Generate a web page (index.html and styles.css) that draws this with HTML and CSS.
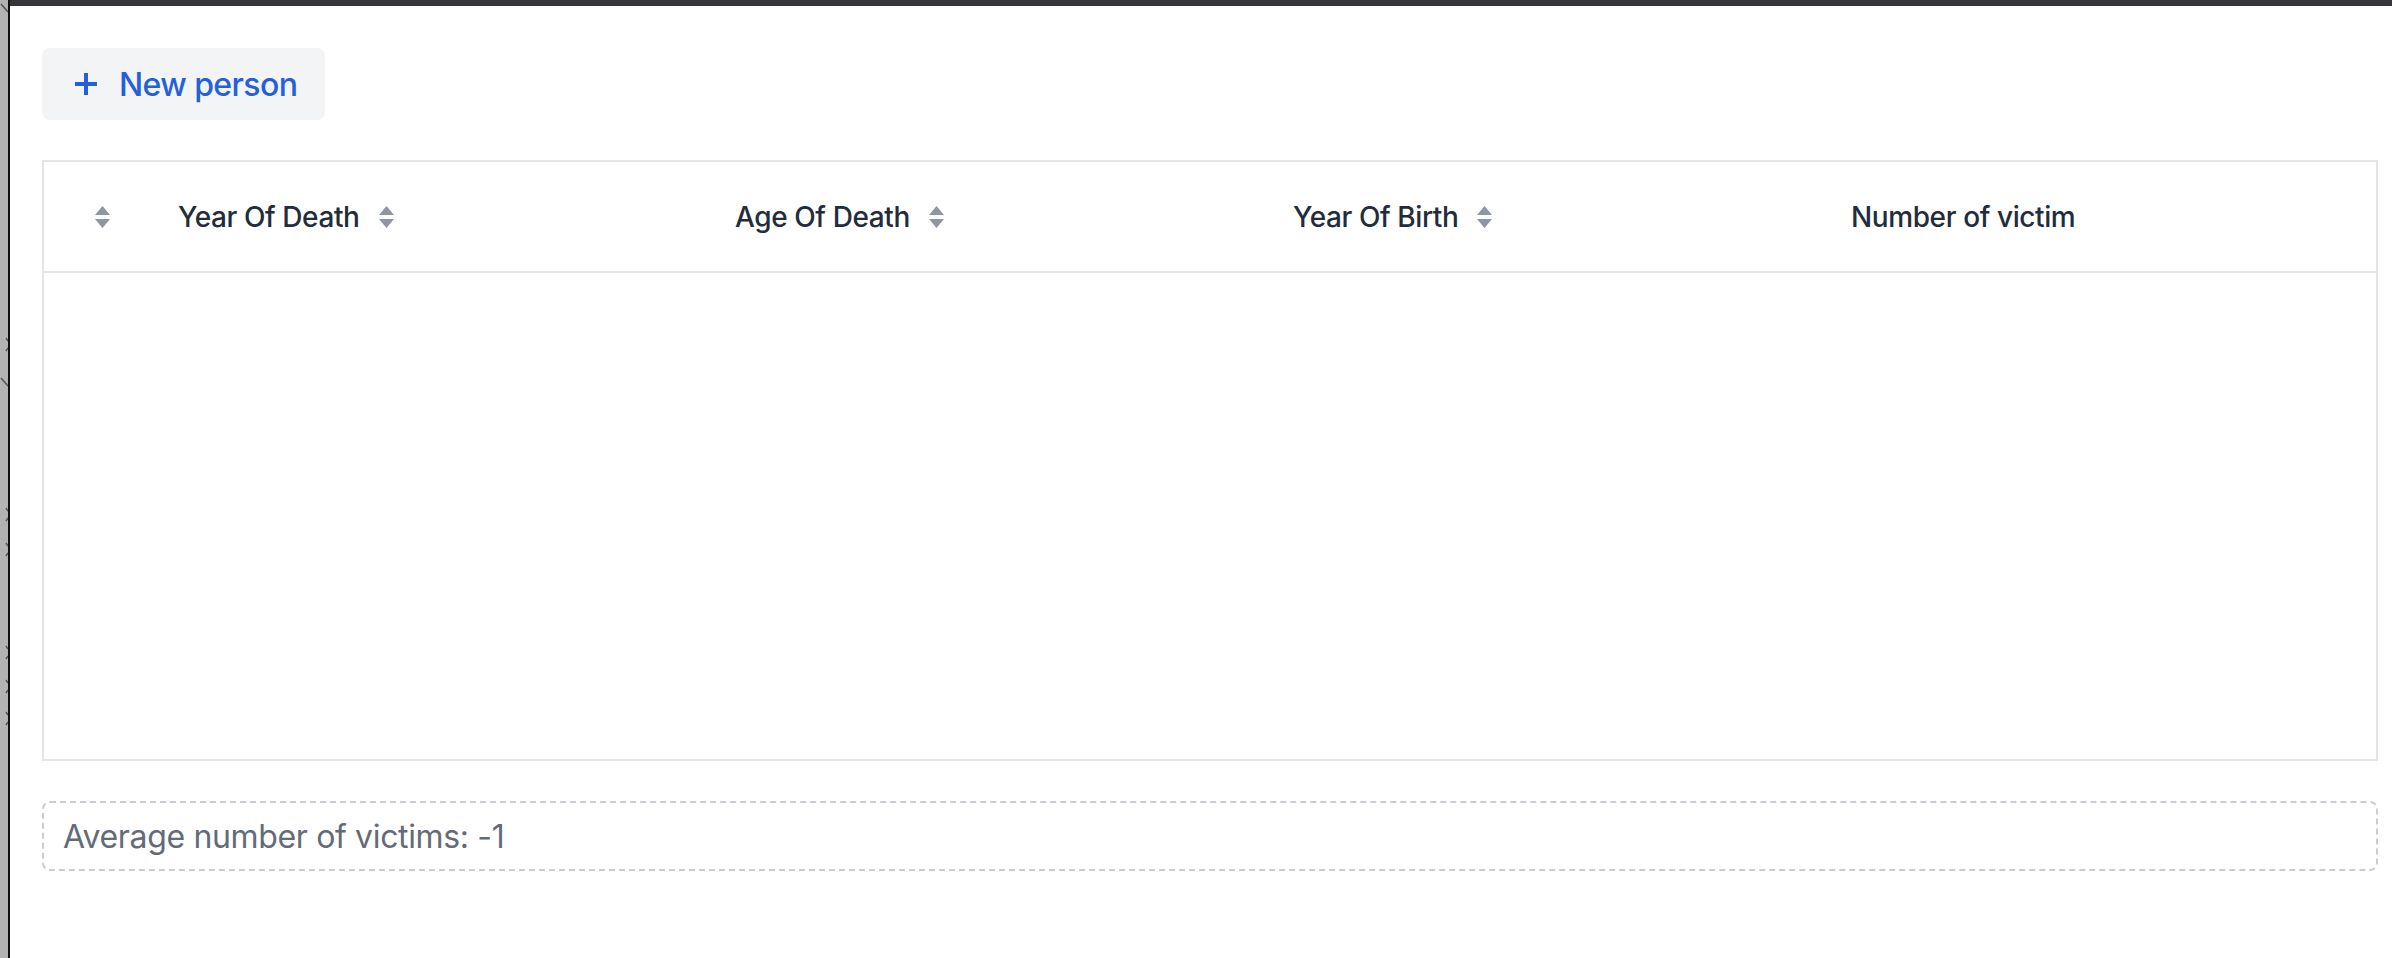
FILE: index.html
```html
<!DOCTYPE html>
<html lang="en">
<head>
<meta charset="utf-8">
<title>Persons</title>
<link rel="stylesheet" href="styles.css">
</head>
<body>
<div class="frame">
  <aside class="edge">
    <svg class="edge-marks" width="8" height="958" viewBox="0 0 8 958">
      <path d="M1 4 L8 12" stroke="#555" stroke-width="1.5"/>
      <path d="M6 338 L8 341 M6 351 L8 348" stroke="#555" stroke-width="1.5"/>
      <path d="M1 378 L8 386" stroke="#555" stroke-width="1.5"/>
      <path d="M6 508 L8 511 M6 521 L8 518" stroke="#555" stroke-width="1.5"/>
      <path d="M6 543 L8 546 M6 556 L8 553" stroke="#555" stroke-width="1.5"/>
      <path d="M6 646 L8 649 M6 659 L8 656" stroke="#555" stroke-width="1.5"/>
      <path d="M6 680 L8 683 M6 693 L8 690" stroke="#555" stroke-width="1.5"/>
      <path d="M6 712 L8 715 M6 725 L8 722" stroke="#555" stroke-width="1.5"/>
    </svg>
  </aside>
  <div class="rule"></div>
  <main class="main">
    <div class="topbar"></div>
    <div class="content">
      <div class="toolbar">
        <button class="btn-new" type="button">
          <svg class="plus" width="24" height="24" viewBox="0 0 24 24">
            <path d="M12 1 V23 M1 12 H23" stroke="currentColor" stroke-width="4" fill="none"/>
          </svg>
          <span>New person</span>
        </button>
      </div>

      <section class="table">
        <div class="thead">
          <div class="th th-select">
            <svg class="sort" width="15" height="22" viewBox="0 0 15 22"><path d="M7.5 0 L15 9 H0 Z M0 13 H15 L7.5 22 Z" fill="currentColor"/></svg>
          </div>
          <div class="th th-death"><span>Year Of Death</span><svg class="sort" width="15" height="22" viewBox="0 0 15 22"><path d="M7.5 0 L15 9 H0 Z M0 13 H15 L7.5 22 Z" fill="currentColor"/></svg></div>
          <div class="th th-age"><span>Age Of Death</span><svg class="sort" width="15" height="22" viewBox="0 0 15 22"><path d="M7.5 0 L15 9 H0 Z M0 13 H15 L7.5 22 Z" fill="currentColor"/></svg></div>
          <div class="th th-birth"><span>Year Of Birth</span><svg class="sort" width="15" height="22" viewBox="0 0 15 22"><path d="M7.5 0 L15 9 H0 Z M0 13 H15 L7.5 22 Z" fill="currentColor"/></svg></div>
          <div class="th th-victims"><span>Number of victim</span></div>
        </div>
        <div class="tbody"></div>
      </section>

      <div class="summary">Average number of victims: -1</div>
    </div>
  </main>
</div>
</body>
</html>
```

FILE: styles.css
```css
* { box-sizing: border-box; }

html, body {
  margin: 0;
  padding: 0;
  background: #ffffff;
}

body {
  font-family: Inter, "Noto Sans", "Liberation Sans", sans-serif;
  width: 2392px;
  height: 958px;
  overflow: hidden;
}

.frame {
  display: flex;
  height: 958px;
}

.edge {
  width: 8px;
  flex: 0 0 8px;
  background: #b3b3b3;
}

.edge-marks { display: block; }

.rule {
  width: 2px;
  flex: 0 0 2px;
  background: #111111;
}

.main {
  flex: 1;
  display: flex;
  flex-direction: column;
}

.topbar {
  height: 6px;
  background: #35353a;
}

.content {
  padding: 42px 14px 0 32px;
  display: flex;
  flex-direction: column;
}

.toolbar {
  display: flex;
}

.btn-new {
  display: flex;
  align-items: center;
  gap: 21px;
  height: 72px;
  padding: 0 28px 0 32px;
  border: none;
  border-radius: 8px;
  background: #f3f4f6;
  color: #2560dc;
  font-family: inherit;
  font-size: 32px;
  font-weight: 500;
  letter-spacing: -0.6px;
  cursor: pointer;
}

.plus { display: block; }

.table {
  margin-top: 40px;
  border: 2px solid #e2e4e8;
  display: flex;
  flex-direction: column;
  height: 601px;
}

.thead {
  display: grid;
  grid-template-columns: 110px 557px 558px 558px 1fr;
  height: 111px;
  border-bottom: 2px solid #e2e4e8;
  flex: 0 0 auto;
}

.th {
  display: flex;
  align-items: center;
  gap: 19px;
  padding-left: 24px;
  font-size: 28px;
  font-weight: 500;
  letter-spacing: -0.4px;
  color: #232c3b;
  white-space: nowrap;
}

.th-select {
  padding-left: 51px;
}

.sort {
  display: block;
  color: #8f96a3;
  flex: 0 0 auto;
}

.tbody {
  flex: 1;
}

.summary {
  margin-top: 40px;
  height: 70px;
  border: 2px dashed #c9ccd3;
  border-radius: 8px;
  padding: 0 19px;
  display: flex;
  align-items: center;
  font-size: 32px;
  font-weight: 400;
  letter-spacing: -0.35px;
  color: #636b79;
}
```
